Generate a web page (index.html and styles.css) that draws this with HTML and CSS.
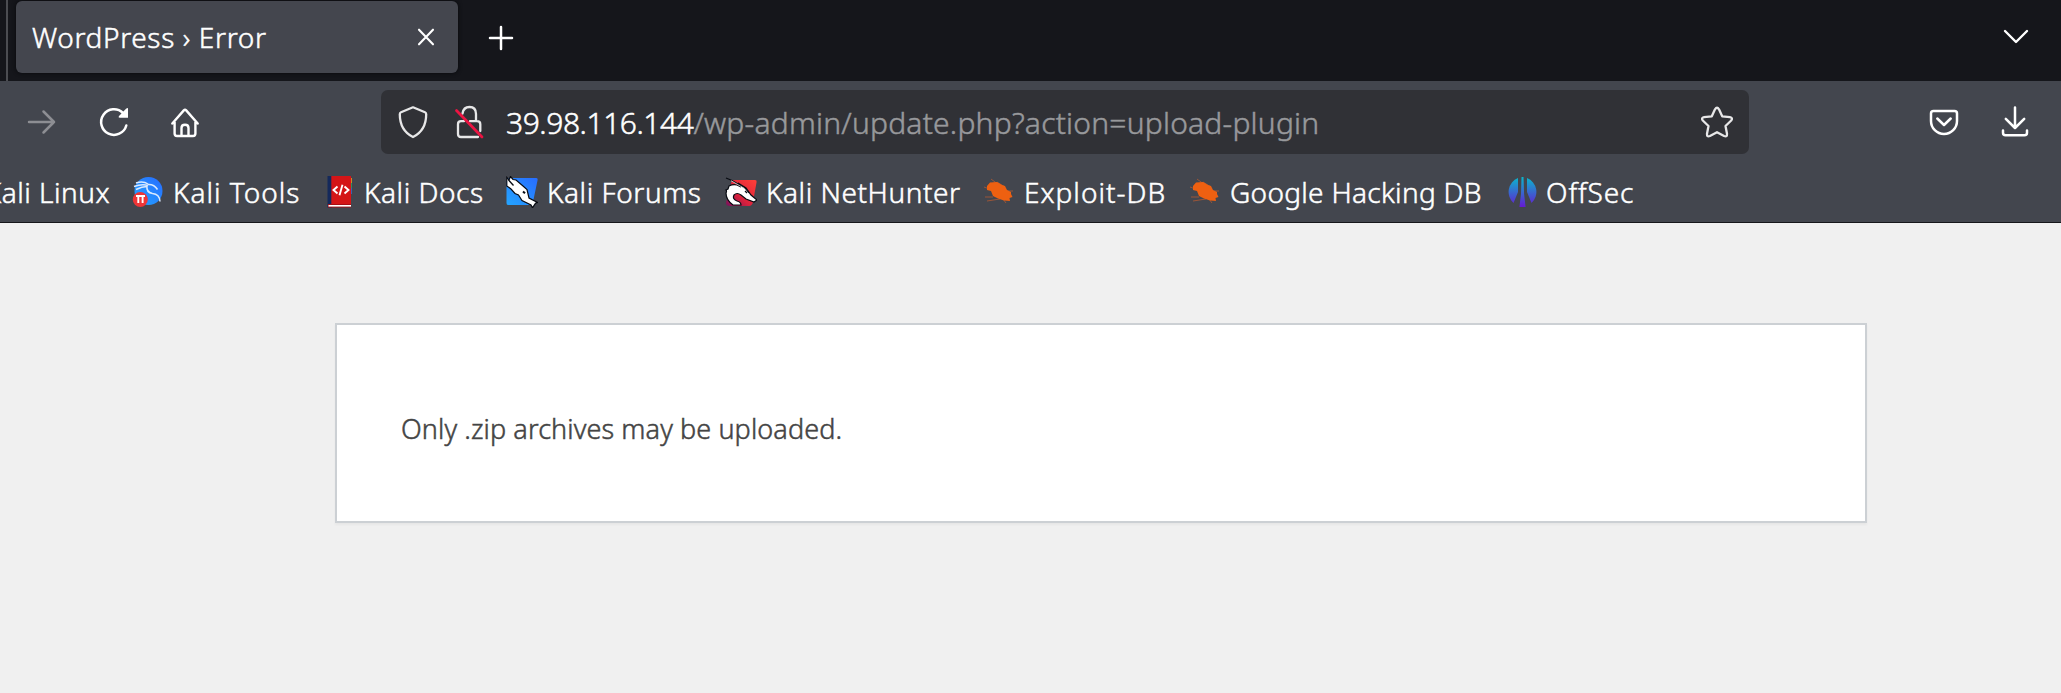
FILE: index.html
```html
<!DOCTYPE html>
<html lang="en">
<head>
<meta charset="utf-8">
<title>WordPress › Error</title>
<link rel="stylesheet" href="styles.css">
</head>
<body>
<header class="browser">
  <div class="tabs">
    <div class="tab"><span class="tab-title">WordPress › Error</span>
      <svg class="close" width="18" height="18" viewBox="0 0 18 18"><path d="M2 1.700 16 16.300M16 1.700 2 16.300"/></svg>
    </div>
    <svg class="plus" width="26" height="26" viewBox="0 0 26 26"><path d="M13 2v22M2 13h22"/></svg>
    <svg class="chevron" width="28" height="18" viewBox="0 0 28 18"><path d="m3 3 11 11L25 3"/></svg>
  </div>
  <div class="toolbar">
    <svg class="forward" width="32" height="32" viewBox="0 0 32 32"><path d="M3 16h25M17.500 5.500 28 16 17.500 26.500"/></svg>
    <svg class="reload" width="32" height="32" viewBox="0 0 32 32"><path d="M28.300 19.500A12.800 12.800 0 1 1 25 7"/><path class="solid" d="M30 2v9.800h-8.300Q19.800 11.500 21 10l7.300-7.600Z"/></svg>
    <svg class="home" width="32" height="32" viewBox="0 0 32 32"><path d="M3.300 17.500 14.800 4.400Q16 3.200 17.200 4.400L28.700 17.500M5.600 16v11.500Q5.600 30 8 30h16q2.400 0 2.400-2.500V16M12.500 30v-8q0-3.200 3.500-3.200t3.500 3.200v8"/></svg>
    <div class="url">
      <svg class="shield" width="32" height="36" viewBox="0 0 32 36"><path d="M16 3.300 28 8.200q1.200.5 1.200 2C29.200 21 24 29 16 33 8 29 2.800 21 2.800 10.200q0-1.500 1.200-2Z"/></svg>
      <svg class="lock" width="32" height="36" viewBox="0 0 32 36"><path d="M9.500 9.500Q10.500 3 16.500 3q6.500 0 6.500 7v7M11 17.200H8q-3 0-3 3V30q0 3 3 3h17M17 17.200h7q3.300 0 3.300 3V27"/><path class="slash" d="M3.500 6.500 29 33"/></svg>
      <span class="address"><span class="host">39.98.116.144</span><span class="path">/wp-admin/update.php?action=upload-plugin</span></span>
      <svg class="star" width="34" height="34" viewBox="0 0 34 34"><path d="M15 4.300q2-3.100 4 0l3.200 7 7.700.9q3.400.6 1.300 3.300l-5.700 5.500 1.500 7.800q.3 3.600-2.900 2.200L17 27.200 9.900 31Q6.700 32.400 7 28.800L8.500 21l-5.700-5.500q-2.100-2.700 1.300-3.300l7.700-.9Z"/></svg>
    </div>
    <svg class="pocket" width="32" height="30" viewBox="0 0 32 30"><path d="M5.500 3h21Q29 3 29 5.500V13a13 13 0 0 1-26 0V5.500Q3 3 5.500 3ZM9.300 10.500 16 17l6.700-6.500"/></svg>
    <svg class="download" width="32" height="34" viewBox="0 0 32 34"><path d="M16 2.500v20M6.800 13.800 16 23l9.200-9.200M4 25.500v2.300q0 2.500 2.500 2.500h19q2.500 0 2.500-2.500v-2.300"/></svg>
  </div>
  <nav class="bookmarks">
    <a class="bm linux"><span>Kali Linux</span></a>
    <a class="bm tools">
      <svg width="32" height="32" viewBox="0 0 32 32"><defs><linearGradient id="blue" x1="1" y1="0" x2="0" y2="1"><stop stop-color="#286cff"/><stop offset="1" stop-color="#24a5ff"/></linearGradient></defs><circle cx="17.500" cy="15" r="14" fill="url(#blue)"/><path d="M5 7q7-2.500 12 1M3 10.500q8-3 14-1M5 13.500q6-3 11-3M17 8.500q6-.5 9.500 5M16 9.500q-1 7 5.500 8 7 .5 7.500 8" fill="none" stroke="#d9e9ff" stroke-width="1.500"/><circle cx="9.300" cy="23.500" r="7.500" fill="#ee3537"/><path d="M5 20h9M7.300 20v7M11.600 20v7" stroke="#fff" stroke-width="1.900"/></svg>
      <span>Kali Tools</span></a>
    <a class="bm docs">
      <svg width="32" height="32" viewBox="0 0 32 32"><path fill="#14295b" d="M5.500 0H10v31.500H5.500z"/><path fill="#d41517" d="M9.300 0H29v28H9.300z"/><path fill="#a50d14" d="M6 28h23v3.500H6z"/><path fill="#fff" d="M6.500 29H29v1.600H6.500z"/><path fill="#ef9821" d="M29 2h.8v5H29z"/><path fill="#28a568" d="M29 7h.8v5H29z"/><path fill="#3969cc" d="M29 12h.8v6H29z"/><path d="m15.500 10.500-4 3.500 4 3.500m7-7 4 3.500-4 3.500m-2-8.700-3 10.500" fill="none" stroke="#fff" stroke-width="1.900"/></svg>
      <span>Kali Docs</span></a>
    <a class="bm forums">
      <svg width="32" height="32" viewBox="0 0 32 32"><path d="M5 2h25q2 0 1.600 2L27 26q-.6 3-3 3H2q-1.500 0-1.500-2V5Q1 2 5 2Z" fill="url(#blue)"/><path d="M.8 1.500 3 4l1.500-3.500L7 3.500 10 4l7 6 4 3.500 2 8.500 8.500 4.500-2 .8-3 4.500L25 29l-9-4.500-3.500-5.500-3.500-1.500L5 13 .8 10Z" fill="#fff" stroke="#080b12" stroke-width="1.200"/><path d="m2.500 4 5 5.500" stroke="#080b12" fill="none" stroke-width="1.300"/><path d="m17 15.500 2 1.800" stroke="#080b12" stroke-width="2"/></svg>
      <span>Kali Forums</span></a>
    <a class="bm hunter">
      <svg width="32" height="32" viewBox="0 0 32 32"><defs><linearGradient id="red" x1="1" y1="0" x2="0" y2="1"><stop stop-color="#ff4038"/><stop offset=".6" stop-color="#db213c"/><stop offset="1" stop-color="#76105d"/></linearGradient></defs><path d="M7 4h23q2 0 1.600 2L28 26q-1 4-4 4H5q-4 0-4-3Z" fill="url(#red)"/><path d="M4 10q4-2 8-1l4 2-3-4 8 5 5 7 6 5-3 2-8-3-5-4q-4-3-7 0-2 4 3 6 4 1 4 4H8Q1 24 1 17q1-2 0-3l2-1Z" fill="#fff" stroke="#080b12" stroke-width="1.200"/><path d="m1 2 6 2.500L20 12l4 5M20 15l2 2" stroke="#080b12" fill="none" stroke-width="1.200"/><path d="m6 4.700 13 7.500" stroke="#ddd" stroke-width=".8"/></svg>
      <span>Kali NetHunter</span></a>
    <a class="bm exploit">
      <svg width="32" height="32" viewBox="0 0 32 32"><g id="bug"><path d="m9 3 8 6M2 11l8 3M5 25l13-2M23 11l-8-5M3 21h8M23 15h8M21 23l3 4" stroke="#9a5538" stroke-width="1"/><path d="m5 10 3-3.500 7-.5 5 3 3 1 2 4 4 2v2l1.500 3-3 1 .500 3-6-.5-6-2-5-2.500-2-5-4-1Z" fill="#ee6011"/></g></svg>
      <span>Exploit-DB</span></a>
    <a class="bm google">
      <svg width="32" height="32" viewBox="0 0 32 32"><use href="#bug"/></svg>
      <span>Google Hacking DB</span></a>
    <a class="bm offsec">
      <svg width="32" height="32" viewBox="0 0 32 32"><defs><linearGradient id="violet" x1="0" y1="1" x2="0" y2="31" gradientUnits="userSpaceOnUse"><stop stop-color="#09b8cc"/><stop offset="1" stop-color="#651ad2"/></linearGradient></defs><path d="M13 2v14L8.500 27A15 15 0 0 1 13 2ZM22 2a15 15 0 0 1 4.500 25L22 16ZM16.500 1h2l.6 17 1.500 13h-6.200L16 18Z" fill="url(#violet)"/></svg>
      <span>OffSec</span></a>
  </nav>
</header>
<main class="page"><section class="notice"><p><span>Only .zip archives may be uploaded.</span></p></section></main>
</body>
</html>
```
FILE: styles.css
```css
* { box-sizing: border-box; }
body { margin: 0; height: 693px; overflow: hidden; background: #f0f0f0; font-family: "Noto Sans", sans-serif; font-weight: 300; -webkit-text-stroke-width: .5px; font-size: 28px; color: #fff; display: flex; flex-direction: column; }
svg { flex: none; display: block; }
.browser { flex: none; height: 223px; background: #43464e; border-bottom: 1px solid #16171b; white-space: nowrap; }
.tabs { height: 81px; background: #15161b; display: flex; align-items: flex-start; padding-top: 1px; background-image: linear-gradient(#4c4d52, #4c4d52); background-size: 2px 81px; background-position: 6px 0; background-repeat: no-repeat; }
.tab { margin-left: 16px; width: 442px; height: 72px; border-radius: 6px; background: #44464e; box-shadow: 0 0 4px #08090c; display: flex; align-items: center; padding: 0 23px 0 16px; justify-content: space-between; letter-spacing: .65px; }
.close, .plus, .chevron, .forward, .reload, .home, .url svg, .pocket, .download { fill: none; stroke: #fff; stroke-width: 2.1; stroke-linecap: round; stroke-linejoin: round; }
.plus { margin: 24px 0 0 30px; stroke-width: 2.5; }
.chevron { margin: 27px 31px 0 auto; stroke-width: 2.4; }
.toolbar { height: 84px; display: flex; align-items: flex-start; padding-top: 9px; }
.toolbar > svg { margin-top: 16px; }
.forward { margin-left: 26px; stroke: #8d8e93; stroke-width: 2.5; }
.reload { margin-left: 40px; stroke-width: 2.5; }
.reload .solid { fill: #fff; stroke: none; }
.home { margin-left: 39px; stroke-width: 2.4; }
.url { margin-left: 180px; width: 1368px; height: 64px; border-radius: 7px; background: #303136; display: flex; align-items: center; font-size: 30px; }
.url svg { stroke: #e7e7e8; stroke-width: 2.3; }
.shield { margin-left: 16px; }
.lock { margin-left: 24px; }
.url .slash { stroke: #ec1442; stroke-width: 2.7; }
.address { margin-left: 21px; }
.host { letter-spacing: -.45px; }
.path { color: #98999c; letter-spacing: .22px; }
.star { margin: 0 15px 0 auto; }
.toolbar > .pocket { margin: 18px 0 0 179px; stroke-width: 2.5; }
.toolbar > .download { margin: 15px 0 0 39px; stroke-width: 2.5; }
.bookmarks { height: 57px; display: grid; grid-template-columns: 131px 191px 184px 219px 257px 206px 317px 140px; align-items: start; padding-top: 11px; }
.bm { display: flex; align-items: center; gap: 9px; height: 32px; letter-spacing: .55px; }
.linux { justify-content: flex-end; padding-right: 21px; letter-spacing: .5px; }
.tools { gap: 10px; letter-spacing: 1px; }
.docs { gap: 10px; }
.exploit { gap: 10px; letter-spacing: 1px; }
.google { gap: 10px; letter-spacing: .3px; }
.offsec { letter-spacing: .9px; }
.page { flex: 1; padding-top: 100px; }
.notice { margin-left: 335px; width: 1532px; height: 200px; border: 2px solid #ccd0d4; background: #fff; box-shadow: 0 2px 2px rgba(0,0,0,.04); padding: 84px 64px 0; }
.notice p { margin: 0; font-size: 27px; line-height: 40px; letter-spacing: .1px; color: #444; }
```
